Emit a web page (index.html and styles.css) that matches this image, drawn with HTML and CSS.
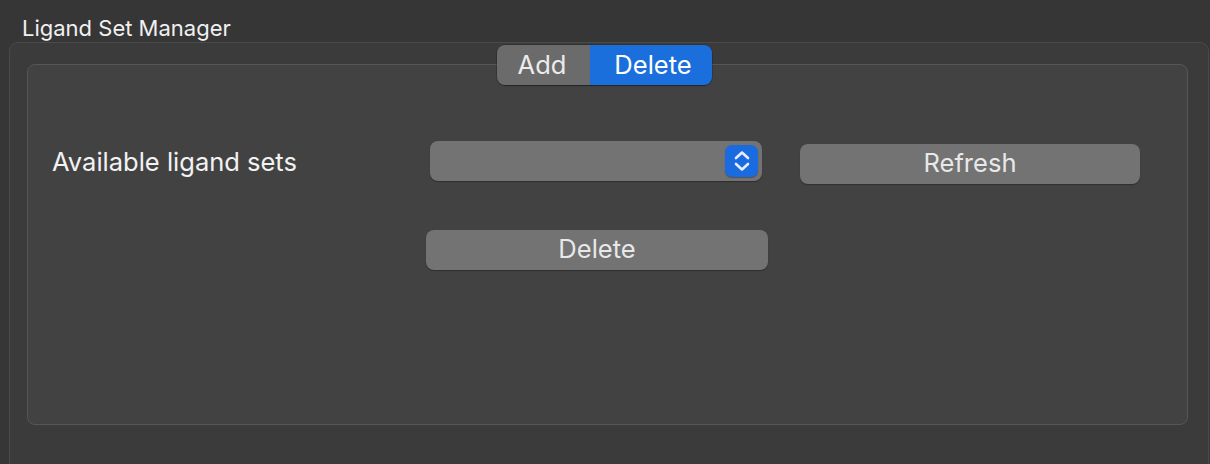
FILE: index.html
```html
<!DOCTYPE html>
<html>
<head>
<meta charset="utf-8">
<link rel="stylesheet" href="styles.css">
</head>
<body>
<div class="title">Ligand Set Manager</div>
<div class="outer">
  <div class="segmented">
    <div class="seg seg-add">Add</div>
    <div class="seg seg-delete">Delete</div>
  </div>
  <div class="inner">
    <div class="row">
      <div class="label">Available ligand sets</div>
      <div class="popup">
        <div class="stepper">
          <svg width="20" height="28" viewBox="0 0 20 28"><path d="M4 11 L10 5.5 L16 11" fill="none" stroke="#e6edfc" stroke-width="2.6" stroke-linecap="round" stroke-linejoin="round"/><path d="M4 17 L10 22.5 L16 17" fill="none" stroke="#e6edfc" stroke-width="2.6" stroke-linecap="round" stroke-linejoin="round"/></svg>
        </div>
      </div>
      <div class="btn refresh">Refresh</div>
    </div>
    <div class="row2">
      <div class="btn delete">Delete</div>
    </div>
  </div>
</div>
</body>
</html>
```
FILE: styles.css
```css
html, body {
  margin: 0;
  padding: 0;
  background: #363636;
  font-family: Inter, "Noto Sans", sans-serif;
  color: #e6e6e6;
  height: 464px;
  overflow: hidden;
}
.title {
  height: 42px;
  padding-left: 22px;
  font-size: 22px;
  line-height: 56px;
  color: #f0f0f0;
  box-sizing: border-box;
}
.outer {
  position: relative;
  margin-left: 9px;
  margin-right: 1px;
  border: 1px solid #4a4a4a;
  border-bottom: none;
  border-radius: 9px 9px 0 0;
  background: #3b3b3b;
  padding: 21px 20px 0 17px;
  height: 430px;
  box-sizing: border-box;
}
.segmented {
  position: absolute;
  top: 2px;
  left: 487px;
  display: flex;
  height: 40px;
  border-radius: 8px;
  overflow: hidden;
  box-shadow: 0 1px 1px rgba(0,0,0,0.35), 0 0 0 0.5px rgba(0,0,0,0.3);
  z-index: 2;
}
.seg {
  display: flex;
  align-items: center;
  justify-content: center;
  font-size: 25.5px;
  padding-bottom: 1px;
  box-sizing: border-box;
}
.seg-add {
  width: 93px;
  background: #6b6b6b;
  color: #ececec;
  padding-right: 3px;
}
.seg-delete {
  width: 122px;
  background: #1b6fdc;
  color: #ffffff;
  padding-left: 4px;
}
.inner {
  height: 361px;
  border: 1px solid #565656;
  border-radius: 8px;
  background: #424242;
  box-sizing: border-box;
  padding: 76px 0 0 24px;
}
.row {
  display: flex;
  align-items: flex-start;
}
.label {
  width: 378px;
  font-size: 25.5px;
  line-height: 42px;
  color: #f2f2f2;
}
.popup {
  width: 332px;
  height: 40px;
  border-radius: 8px;
  background: #737373;
  box-shadow: 0 1px 1px rgba(0,0,0,0.3);
  display: flex;
  justify-content: flex-end;
  align-items: center;
  padding-right: 4px;
  box-sizing: border-box;
}
.stepper {
  width: 33px;
  height: 32px;
  border-radius: 7px;
  background: #1a6ae0;
  display: flex;
  align-items: center;
  justify-content: center;
  box-shadow: 0 1px 1px rgba(0,0,0,0.3);
}
.btn {
  height: 40px;
  border-radius: 8px;
  background: #737373;
  box-shadow: 0 1px 1px rgba(0,0,0,0.3);
  display: flex;
  align-items: center;
  justify-content: center;
  font-size: 25.5px;
  color: #e8e8e8;
  padding-bottom: 3px;
  box-sizing: border-box;
}
.refresh {
  width: 340px;
  margin-left: 38px;
  margin-top: 3px;
}
.row2 {
  padding-left: 374px;
  margin-top: 46px;
}
.delete {
  width: 342px;
}
```
